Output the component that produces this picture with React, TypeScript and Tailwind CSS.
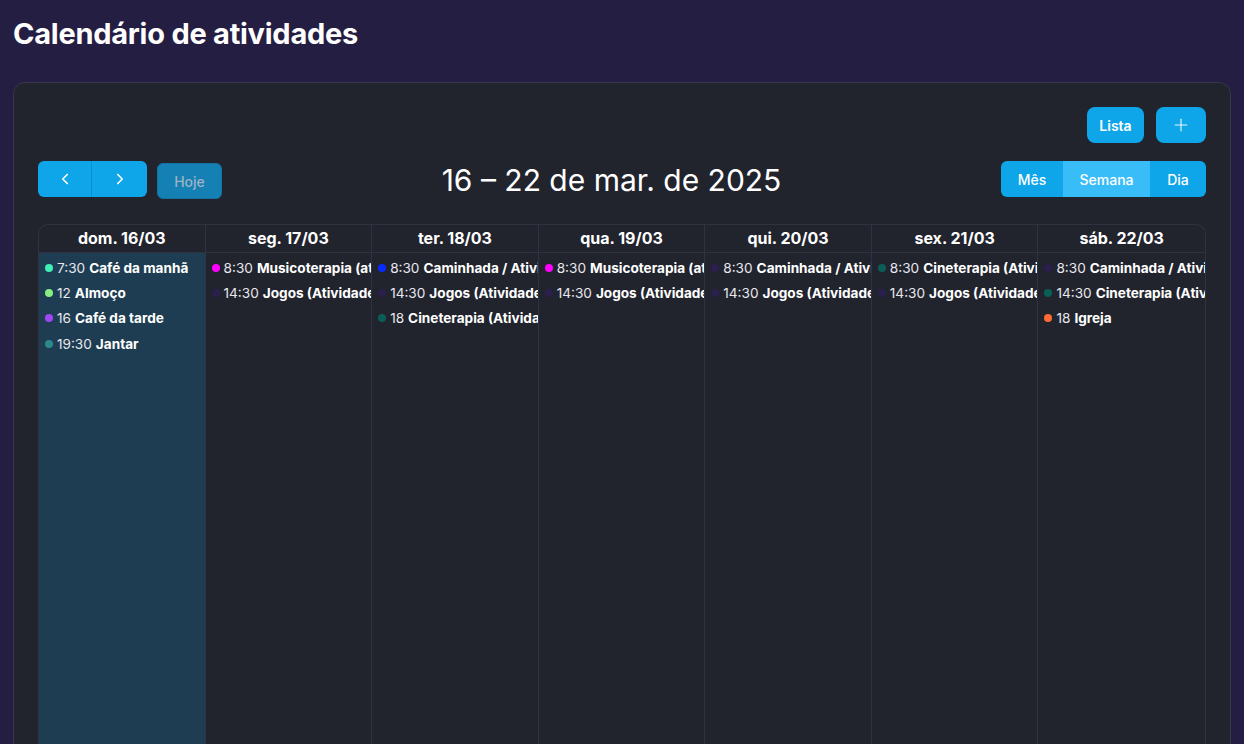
import { ChevronLeft, ChevronRight, Plus } from 'lucide-react';

type CalEvent = { time: string; title: string; color: string };

type Day = { label: string; today?: boolean; events: CalEvent[] };

const DARK = '#2a1f4d';
const TEAL = '#0b5e57';

const days: Day[] = [
  {
    label: 'dom. 16/03',
    today: true,
    events: [
      { time: '7:30', title: 'Café da manhã', color: '#3ef0b4' },
      { time: '12', title: 'Almoço', color: '#86ef7f' },
      { time: '16', title: 'Café da tarde', color: '#9f47f5' },
      { time: '19:30', title: 'Jantar', color: '#2a8a8a' },
    ],
  },
  {
    label: 'seg. 17/03',
    events: [
      { time: '8:30', title: 'Musicoterapia (atividade)', color: '#ff00ff' },
      { time: '14:30', title: 'Jogos (Atividade)', color: DARK },
    ],
  },
  {
    label: 'ter. 18/03',
    events: [
      { time: '8:30', title: 'Caminhada / Atividade', color: '#0a2bff' },
      { time: '14:30', title: 'Jogos (Atividade)', color: DARK },
      { time: '18', title: 'Cineterapia (Atividade)', color: TEAL },
    ],
  },
  {
    label: 'qua. 19/03',
    events: [
      { time: '8:30', title: 'Musicoterapia (atividade)', color: '#ff00ff' },
      { time: '14:30', title: 'Jogos (Atividade)', color: DARK },
    ],
  },
  {
    label: 'qui. 20/03',
    events: [
      { time: '8:30', title: 'Caminhada / Atividade', color: DARK },
      { time: '14:30', title: 'Jogos (Atividade)', color: DARK },
    ],
  },
  {
    label: 'sex. 21/03',
    events: [
      { time: '8:30', title: 'Cineterapia (Atividade)', color: TEAL },
      { time: '14:30', title: 'Jogos (Atividade)', color: DARK },
    ],
  },
  {
    label: 'sáb. 22/03',
    events: [
      { time: '8:30', title: 'Caminhada / Atividade', color: DARK },
      { time: '14:30', title: 'Cineterapia (Atividade)', color: TEAL },
      { time: '18', title: 'Igreja', color: '#ff6a35' },
    ],
  },
];

function EventRow({ ev }: { ev: CalEvent }) {
  return (
    <div className="flex h-[25.4px] items-center overflow-hidden whitespace-nowrap pl-[6px] text-[13.6px]">
      <span
        className="mr-[4px] h-[8px] w-[8px] shrink-0 rounded-full"
        style={{ backgroundColor: ev.color }}
      />
      <span className="text-[#e8e8ee]">{ev.time}</span>
      <span className="ml-[4px] font-bold text-white">{ev.title}</span>
    </div>
  );
}

export default function App() {
  return (
    <div
      className="min-h-screen bg-[#251e43] px-[13px] pt-[16px] text-white"
      style={{ fontFamily: 'Inter, "Noto Sans", sans-serif' }}
    >
      <h1 className="mb-[30px] text-[29px] font-bold leading-[36px] tracking-[-0.25px]">
        Calendário de atividades
      </h1>

      <div className="rounded-xl border border-[#363849] bg-[#21232d] p-6 pb-0">
        <div className="mb-[18px] flex justify-end gap-3">
          <button className="h-9 w-[57px] rounded-lg bg-[#0ea5e9] text-[14px] font-semibold text-white">
            Lista
          </button>
          <button className="flex h-9 w-[50px] items-center justify-center rounded-lg bg-[#0ea5e9] text-[#e6f6fd]">
            <Plus className="h-[20px] w-[20px]" strokeWidth={1.4} />
          </button>
        </div>

        <div className="mb-[25px] flex items-start justify-between">
          <div className="flex items-start gap-[10px]">
            <div className="flex h-9 overflow-hidden rounded-md bg-[#0ea5e9]">
              <button className="flex w-[54px] items-center justify-center border-r border-[#0b8fcc]">
                <ChevronLeft className="h-[18px] w-[18px]" strokeWidth={2.2} />
              </button>
              <button className="flex w-[55px] items-center justify-center">
                <ChevronRight className="h-[18px] w-[18px]" strokeWidth={2.2} />
              </button>
            </div>
            <button className="mt-[2px] h-9 w-[65px] rounded-md border border-[#1473a3] bg-[#1580b4] text-[14px] font-medium text-[#9db3c5]">
              Hoje
            </button>
          </div>

          <h2 className="mt-[1px] text-[30px] font-normal leading-[36px] text-white">
            16 – 22 de mar. de 2025
          </h2>

          <div className="flex h-9 overflow-hidden rounded-md bg-[#0ea5e9] text-[14px] font-medium">
            <button className="w-[62px]">Mês</button>
            <button className="w-[87px] bg-[#38bdf8]">Semana</button>
            <button className="w-[56px]">Dia</button>
          </div>
        </div>

        <div className="overflow-hidden rounded-t-[10px] border border-b-0 border-[#2f3240]">
          <div className="grid grid-cols-7 border-b border-[#2f3240]">
            {days.map((d, i) => (
              <div
                key={d.label}
                className={`flex h-[27px] items-center justify-center pb-[1px] text-[16px] font-bold ${
                  i < 6 ? 'border-r border-[#2f3240]' : ''
                }`}
              >
                {d.label}
              </div>
            ))}
          </div>
          <div className="grid h-[600px] grid-cols-7">
            {days.map((d, i) => (
              <div
                key={d.label}
                className={`min-w-0 pt-[2px] ${d.today ? 'bg-[#1e3d52]' : ''} ${
                  i < 6 ? 'border-r border-[#2f3240]' : ''
                }`}
              >
                {d.events.map((ev) => (
                  <EventRow key={ev.time + ev.title} ev={ev} />
                ))}
              </div>
            ))}
          </div>
        </div>
      </div>
    </div>
  );
}
